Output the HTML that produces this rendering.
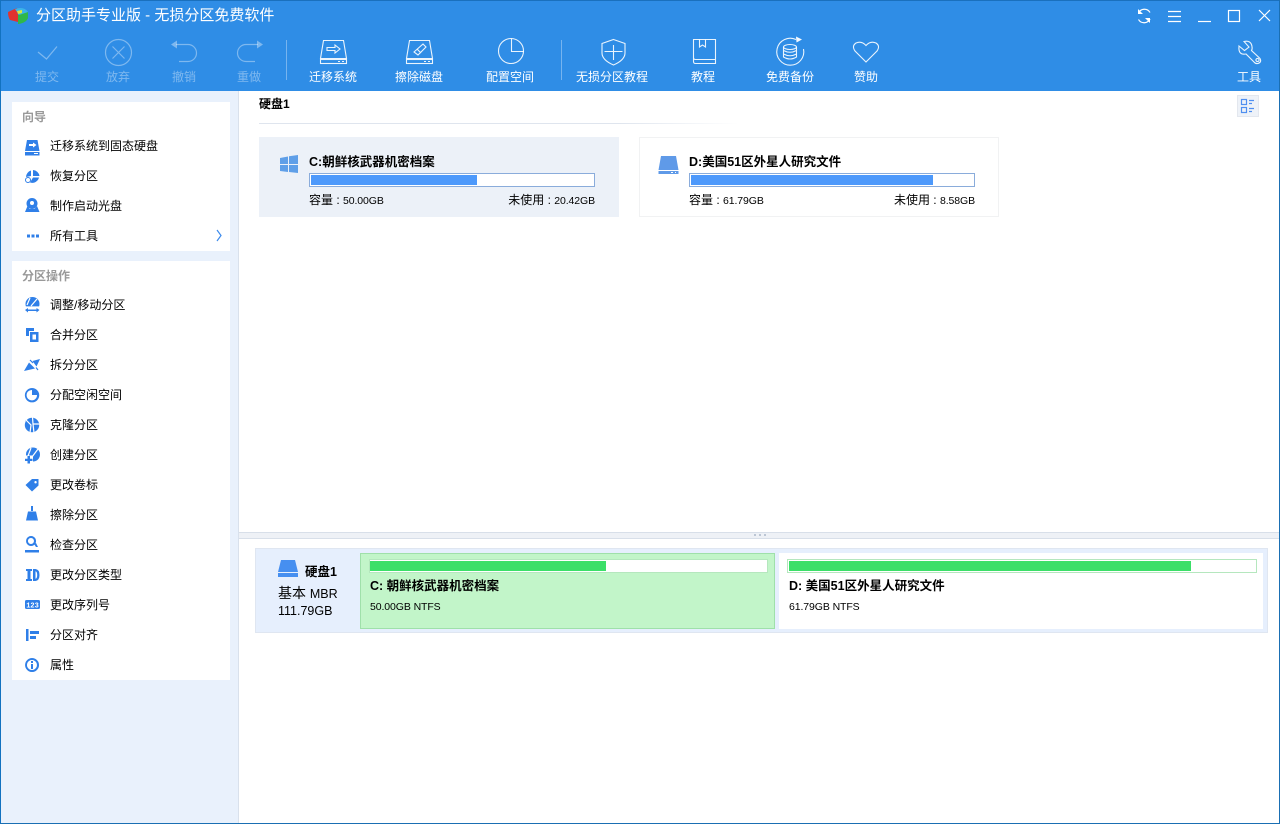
<!DOCTYPE html>
<html lang="zh"><head><meta charset="utf-8"><title>分区助手专业版</title>
<style>
html,body{margin:0;padding:0;background:#fff}
body{width:1280px;height:824px;position:relative;overflow:hidden;font-family:"Liberation Sans","WenQuanYi Zen Hei","Noto Sans CJK SC",sans-serif;font-size:12px;color:#000}
div{position:absolute;box-sizing:border-box}
.t{white-space:nowrap;line-height:16px;height:16px}
.l{white-space:nowrap;line-height:16px;height:16px;width:120px;text-align:center;color:#fff;top:69px}
.d{color:rgba(255,255,255,.38)}
.m{left:50px;white-space:nowrap;line-height:16px;height:16px;color:#000}
.h{left:22px;font-weight:bold;color:#999;line-height:16px;height:16px}
.b{font-weight:bold}
.s{font-size:10.5px;letter-spacing:-.1px}
svg{position:absolute;left:0;top:0}
</style></head><body>
<div style="left:0;top:0;width:1280px;height:91px;background:#2f8de6;border-top:1px solid #1a70bd"></div>
<div style="left:0;top:91px;width:239px;height:733px;background:#e9f1fc;border-right:1px solid #d9e1ec"></div>
<div style="left:12px;top:102px;width:218px;height:149px;background:#fff"></div>
<div style="left:12px;top:261px;width:218px;height:419px;background:#fff"></div>
<div style="left:259px;top:123px;width:480px;height:1px;background:linear-gradient(90deg,#dfe5ee 75%,#fff)"></div>
<div style="left:259px;top:137px;width:360px;height:80px;background:#ecf1f8"></div>
<div style="left:639px;top:137px;width:360px;height:80px;background:#fff;border:1px solid #f1f2f3"></div>
<div style="left:309px;top:173px;width:286px;height:14px;background:#fff;border:1px solid #8aacdb"></div>
<div style="left:311px;top:175px;width:166px;height:10px;background:#4d99fb"></div>
<div style="left:689px;top:173px;width:286px;height:14px;background:#fff;border:1px solid #8aacdb"></div>
<div style="left:691px;top:175px;width:242px;height:10px;background:#4d99fb"></div>
<div style="left:239px;top:532px;width:1040px;height:7px;background:#eef1f6;border-top:1px solid #d8dfe9;border-bottom:1px solid #d8dfe9"></div>
<div style="left:255px;top:548px;width:1013px;height:85px;background:#e6effd;border:1px solid #dfe6f1"></div>
<div style="left:360px;top:553px;width:415px;height:76px;background:#c2f5c9;border:1px solid #9fe0aa"></div>
<div style="left:369px;top:559px;width:399px;height:14px;background:#fff;border:1px solid #b5e7be"></div>
<div style="left:370px;top:561px;width:236px;height:10px;background:#3bdf68"></div>
<div style="left:779px;top:553px;width:484px;height:76px;background:#fff"></div>
<div style="left:787px;top:559px;width:470px;height:14px;background:#fff;border:1px solid #b5e7be"></div>
<div style="left:789px;top:561px;width:402px;height:10px;background:#3bdf68"></div>
<div style="left:0;top:0;width:1px;height:824px;background:#1272c0"></div>
<div style="left:1279px;top:0;width:1px;height:824px;background:#1a6fb3"></div>
<div style="left:0;top:823px;width:1280px;height:1px;background:#1a6fb3"></div>

<svg width="1280" height="824" viewBox="0 0 1280 824" fill="none">
<!-- logo -->
<path d="M8 12 L17 8 L18 15 L18 22 L10 20 Q8 17 8 12Z" fill="#e0332f"/>
<path d="M18 15 L28 12 L28 18 Q26 23 18 24Z" fill="#2fb84a"/>
<path d="M15 9 Q24 6 28 12 L19 15Z" fill="#3bb4e8"/>
<path d="M17 11 L22 10 L22 13 L18 14Z" fill="#d8e83a"/>
<!-- disabled tools -->
<g stroke="#fff" stroke-opacity=".38" stroke-width="1.2">
<path d="M38 52 L46.5 59 L57 46.5"/>
<circle cx="118.5" cy="52.5" r="13"/><path d="M112.5 46.5 L124.5 58.5 M124.5 46.5 L112.5 58.5"/>
<path d="M176 44.5 H188 A8.5 8.5 0 0 1 188 61.5 H179"/>
<path d="M258 44.5 H246 A8.5 8.5 0 0 0 246 61.5 H255"/>
</g>
<path d="M171 44.5 L177 40.5 V48.5Z M263 44.5 L257 40.5 V48.5Z" fill="#fff" fill-opacity=".38"/>
<!-- separators -->
<path d="M286.5 40 V80 M561.5 40 V80" stroke="#fff" stroke-opacity=".35"/>
<g stroke="#fff" stroke-width="1.1" stroke-opacity=".9">
<!-- migrate drive -->
<path d="M323.5 40.5 H343.5 L346.5 58.5 H320.5Z"/><rect x="320.5" y="59.5" width="26" height="4"/>
<path d="M327 47.5 H335 V45 L340 49 L335 53 V50.5 H327Z"/><path d="M338 61.5 H340 M342 61.5 H344"/>
<!-- wipe drive -->
<path d="M409.5 40.5 H429.5 L432.5 58.5 H406.5Z"/><rect x="406.5" y="59.5" width="26" height="4"/>
<path d="M414 52 L423 44 L426 47 L418 55Z M417 49 L421 53"/><path d="M424 61.5 H426 M428 61.5 H430"/>
<!-- pie -->
<circle cx="511" cy="51" r="12.5"/><path d="M511.5 38.5 V51.5 H524"/>
<!-- shield -->
<path d="M613.5 39.5 L625 43.5 V53 Q625 60 613.5 65 Q602 60 602 53 V43.5Z"/><path d="M613.5 45 V60 M604.5 51.5 H622.5"/>
<!-- book -->
<path d="M715.5 59.5 H695.5 Q693.5 59.5 693.5 57.5 V39.5 H715.5 V63.5 H695.5 Q693.5 63.5 693.5 61.5 V57.5"/><path d="M699.5 39.5 V47 L702.5 45 L705.5 47 V39.5"/>
<!-- backup -->
<path d="M796 39.5 A13.5 13.5 0 1 0 803.5 49"/><ellipse cx="790" cy="47" rx="6.5" ry="2.5"/><path d="M783.5 47 V57 Q790 61 796.500 57 V47 M783.5 50.500 Q790 54 796.5 50.500 M783.5 54 Q790 57.500 796.5 54"/>
<!-- heart -->
<path d="M866 62 L855 51 Q851.500 46 856 43 Q861.500 40.500 866 45.500 Q870.500 40.500 876 43 Q880.500 46 877 51Z"/>
<!-- wrench -->
<path d="M1239 46 L1244.500 50.500 L1249 47 L1244 41.500 Q1251 40 1252 46.500 Q1252.500 49 1251.500 50.500 L1260 58.500 Q1262 62 1258 63.500 Q1255.500 64 1254 62 L1246 54 Q1238 55.500 1239 46Z"/><circle cx="1257.500" cy="60" r="1.600"/>
</g>
<path d="M796 36.500 L802 39.500 L796.500 42.500Z" fill="#fff" fill-opacity=".95"/>
<!-- window controls -->
<g stroke="#fff" stroke-width="1.2">
<path d="M1138.500 13 A6.500 6.500 0 0 1 1150 12.500 M1150 19 A6.500 6.500 0 0 1 1138.500 19.500"/>
<path d="M1168 11.500 H1181 M1168 16.500 H1181 M1168 21.500 H1181"/>
<path d="M1198 21.500 H1211"/><rect x="1228.500" y="10.500" width="11" height="11"/>
<path d="M1259 10 L1270 21 M1270 10 L1259 21"/>
</g>
<path d="M1138 9 V14 H1143Z M1150 23 V18 H1145Z" fill="#fff"/>
<!-- view button -->
<rect x="1237.500" y="95.500" width="21" height="21" fill="#eef2f8" stroke="#e3e7ee"/>
<g stroke="#4f8ff0" stroke-width="1.200"><rect x="1241.500" y="99.500" width="5" height="5"/><rect x="1241.500" y="107.500" width="5" height="5"/><path d="M1249 100.500 H1254 M1249 103.500 H1252 M1249 108.500 H1254 M1249 111.500 H1252"/></g>
<!-- sidebar icons -->
<g fill="#2f7fe8">
<path d="M27 140 H37.500 L39.500 151 H25Z"/><rect x="25" y="152" width="14.500" height="3.500"/>
<path d="M29 144 H33 V142.500 L36.500 145 L33 147.500 V146 H29Z" fill="#fff"/><rect x="34" y="153" width="4" height="1" fill="#fff"/>
<path d="M33 170 A7 7 0 0 1 39.500 176 H33Z M31 170.500 V176 L26 177 A7 7 0 0 1 31 170.500Z M33 177.500 H39 A7 7 0 0 1 30 182.500Z"/><circle cx="28" cy="180" r="2.500" fill="none" stroke="#2f7fe8"/>
<path d="M32 198 A5.500 5.500 0 0 1 32 209 A5.500 5.500 0 0 1 32 198Z"/><circle cx="32" cy="203" r="2" fill="#fff"/><path d="M27.500 206 L25 212 H39.500 L37 206 L34.500 209 H29.500Z"/>
<rect x="27" y="234.500" width="3" height="3"/><rect x="31.500" y="234.500" width="3" height="3"/><rect x="36" y="234.500" width="3" height="3"/>
<!-- adjust -->
<circle cx="32.500" cy="304" r="7"/><path d="M30 298 L27 305 M37 299 L31 306 M25 307 H40 V313 H25Z" stroke="#fff" stroke-width="1.200" fill="#fff"/>
<path d="M25 310 L28 308 V309.500 H36.500 V308 L39.500 310 L36.500 312.500 V311 H28 V312.500Z"/>
<!-- merge -->
<path d="M26 328 H34 V331 H29 V336 H26Z"/><path fill-rule="evenodd" d="M30 332 H38.500 V342 H30Z M32.500 334.500 V339.500 H36 V334.500Z"/>
<!-- split -->
<path d="M24 371 L29 362.500 L35 368.500Z M32.500 361 L40 359 L36.500 366.500Z"/><path d="M30 360 L33 363 M36 367.500 L38 370" stroke="#2f7fe8" stroke-width="1.200"/>
<path fill-rule="evenodd" d="M32 388 A7.200 7.200 0 1 0 32.100 388Z M32 390 V395 H37 A5.200 5.200 0 1 1 32 390Z"/>
<!-- clone -->
<circle cx="32" cy="425" r="7.200"/><path d="M25 419 L31 425 L30 433 M32.500 417 L33 424 L40 424 M33 424 L34 433" stroke="#fff" stroke-width="1.200"/>
<!-- create -->
<circle cx="33" cy="454.500" r="7"/><path d="M31 448 L28 456 M38 449 L32 457" stroke="#fff" stroke-width="1.200"/><rect x="24" y="455.500" width="9" height="9" fill="#fff"/>
<path d="M27.500 456 H30 V458.700 H32.500 V461 H30 V463.500 H27.500 V461 H25 V458.700 H27.500Z"/>
<path fill-rule="evenodd" d="M32 479 H38.500 V485.500 L32 491.500 L25.500 485Z M35.500 481 A1.200 1.200 0 1 0 35.600 481Z"/>
<path d="M31 506 H33 V511 H31Z M28 511.500 H36 L38 520.500 H26Z"/>
<path fill-rule="evenodd" d="M31 536 A5 5 0 1 0 31.100 536Z M31 538 A3 3 0 1 1 30.900 538Z"/><path d="M34 544 L36 543 L38 547 H36Z"/><path d="M25 550 H39 V552.500 H25Z"/>
<!-- ID -->
<path d="M26 569 H32 V571 H30.500 V579 H32 V581 H26 V579 H27.500 V571 H26Z"/><path fill-rule="evenodd" d="M33 569 H35.500 Q39.500 569.500 39.500 575 Q39.500 580.500 35.500 581 H33Z M35.500 571.200 V578.800 Q37.200 578.500 37.200 575 Q37.200 571.500 35.500 571.200Z"/>
<rect x="25" y="600" width="15" height="9" rx="1.500"/>
<rect x="26" y="629" width="2.500" height="12"/><rect x="30" y="631" width="9" height="3"/><rect x="30" y="636" width="6" height="3"/>
<path fill-rule="evenodd" d="M32 658 A7 7 0 1 0 32.100 658Z M32 660 A5 5 0 1 1 31.900 660Z"/><rect x="31" y="664" width="2" height="5"/><rect x="31" y="661" width="2" height="2"/>
<!-- drive icons -->
<path d="M281 560 H295 L298 572 H278Z" fill="#468ff0"/><rect x="278" y="573" width="20" height="4" fill="#468ff0"/>
<path d="M661 156 H676 L678.500 170 H658.500Z" fill="#5f9ae8"/><path d="M658.500 171 H678.500 V174 H658.500Z" fill="#5f9ae8"/>
</g>
<path d="M217 230 L221 235.500 L217 241" stroke="#3d8bec" stroke-width="1.200"/>
<path d="M671 172.500 H673 M675 172.500 H676" stroke="#fff"/>
<text x="32.500" y="607.500" text-anchor="middle" font-family="Liberation Mono" font-size="7" font-weight="bold" fill="#fff">123</text>
<path d="M280 158 L288 156.500 V164 H280Z M289 156.300 L298 155 V164 H289Z M280 165 H288 V172 L280 171Z M289 165 H298 V173 L289 172Z" fill="#5f9fe8"/>
<g fill="#bcc6d4"><rect x="754" y="534" width="2" height="2"/><rect x="759" y="534" width="2" height="2"/><rect x="764" y="534" width="2" height="2"/></g>
</svg>

<div class="t" style="left:36px;top:7px;font-size:15px;line-height:18px;height:18px;color:#fff">分区助手专业版 - 无损分区免费软件</div>
<div class="l d" style="left:-13px">提交</div>
<div class="l d" style="left:58px">放弃</div>
<div class="l d" style="left:124px">撤销</div>
<div class="l d" style="left:189px">重做</div>
<div class="l" style="left:273px">迁移系统</div>
<div class="l" style="left:359px">擦除磁盘</div>
<div class="l" style="left:450px">配置空间</div>
<div class="l" style="left:552px">无损分区教程</div>
<div class="l" style="left:643px">教程</div>
<div class="l" style="left:730px">免费备份</div>
<div class="l" style="left:806px">赞助</div>
<div class="l" style="left:1189px">工具</div>

<div class="h" style="top:109px">向导</div>
<div class="m" style="top:138px">迁移系统到固态硬盘</div>
<div class="m" style="top:168px">恢复分区</div>
<div class="m" style="top:198px">制作启动光盘</div>
<div class="m" style="top:228px">所有工具</div>
<div class="h" style="top:268px">分区操作</div>
<div class="m" style="top:297px">调整/移动分区</div>
<div class="m" style="top:327px">合并分区</div>
<div class="m" style="top:357px">拆分分区</div>
<div class="m" style="top:387px">分配空闲空间</div>
<div class="m" style="top:417px">克隆分区</div>
<div class="m" style="top:447px">创建分区</div>
<div class="m" style="top:477px">更改卷标</div>
<div class="m" style="top:507px">擦除分区</div>
<div class="m" style="top:537px">检查分区</div>
<div class="m" style="top:567px">更改分区类型</div>
<div class="m" style="top:597px">更改序列号</div>
<div class="m" style="top:627px">分区对齐</div>
<div class="m" style="top:657px">属性</div>

<div class="t b" style="left:259px;top:96px">硬盘1</div>
<div class="t b" style="left:309px;top:154px;font-size:12.500px">C:朝鲜核武器机密档案</div>
<div class="t" style="left:309px;top:192px">容量 : <span class="s">50.00GB</span></div>
<div class="t" style="right:685px;top:192px">未使用 : <span class="s">20.42GB</span></div>
<div class="t b" style="left:689px;top:154px;font-size:12.500px">D:美国51区外星人研究文件</div>
<div class="t" style="left:689px;top:192px">容量 : <span class="s">61.79GB</span></div>
<div class="t" style="right:305px;top:192px">未使用 : <span class="s">8.58GB</span></div>

<div class="t b" style="left:305px;top:564px;font-size:12.500px">硬盘1</div>
<div class="t" style="left:278px;top:585px;font-size:14px">基本 <span style="font-size:12.500px">MBR</span></div>
<div class="t" style="left:278px;top:603px;font-size:12.500px">111.79GB</div>
<div class="t b" style="left:370px;top:578px;font-size:12.500px">C: 朝鲜核武器机密档案</div>
<div class="t s" style="left:370px;top:599px">50.00GB NTFS</div>
<div class="t b" style="left:789px;top:578px;font-size:12.500px">D: 美国51区外星人研究文件</div>
<div class="t s" style="left:789px;top:599px">61.79GB NTFS</div>
</body></html>
